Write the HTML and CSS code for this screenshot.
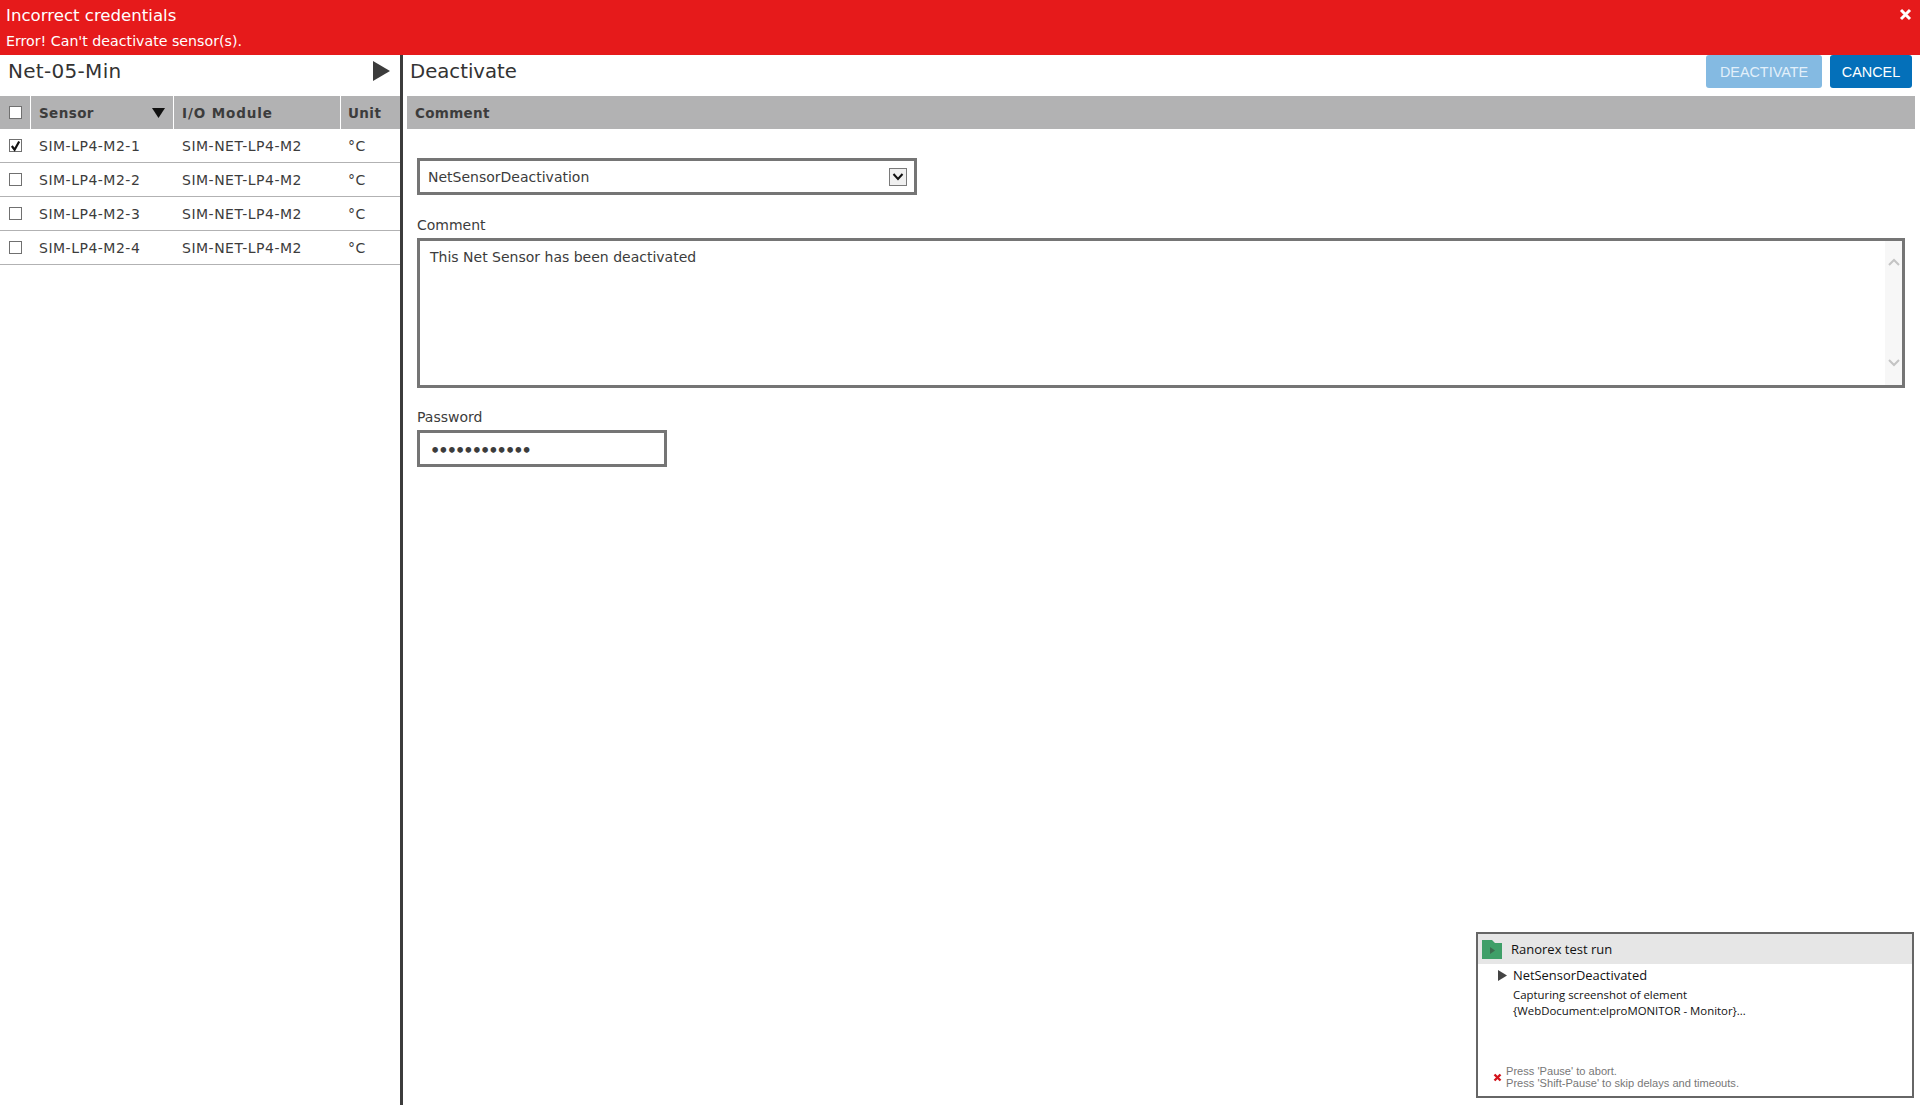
FILE: index.html
```html
<!DOCTYPE html>
<html>
<head>
  <meta charset="utf-8">
  <title>Deactivate</title>
  <link rel="stylesheet" href="styles.css">
</head>
<body>
  <div class="banner">
    <div class="banner-text">
      <div class="banner-title">Incorrect credentials</div>
      <div class="banner-msg">Error! Can't deactivate sensor(s).</div>
    </div>
    <svg class="banner-close" width="13" height="13" viewBox="0 0 13 13"><path d="M2 2l9 9M11 2l-9 9" stroke="#fff" stroke-width="3" fill="none"/></svg>
  </div>

  <div class="main">
    <div class="left-pane">
      <div class="pane-head">
        <span class="pane-title title-net">Net-05-Min</span>
        <svg class="play" width="17" height="20" viewBox="0 0 17 20"><path d="M0 0l17 10L0 20z" fill="#3c3c3c"/></svg>
      </div>
      <div class="grid-row grid-header">
        <div class="cell cell-check"><span class="check"></span></div>
        <div class="cell cell-sensor">Sensor<svg width="13" height="10" viewBox="0 0 13 10"><path d="M0 0h13L6.500 10z" fill="#111"/></svg></div>
        <div class="cell cell-module">I/O Module</div>
        <div class="cell cell-unit">Unit</div>
      </div>
      <div class="grid-row">
        <div class="cell cell-check">
          <span class="check"><svg width="12" height="12" viewBox="0 0 12 12"><path d="M2 6l3 4 5-9" stroke="#111" stroke-width="2.400" fill="none"/></svg></span>
        </div>
        <div class="cell cell-sensor">SIM-LP4-M2-1</div>
        <div class="cell cell-module">SIM-NET-LP4-M2</div>
        <div class="cell cell-unit">°C</div>
      </div>
      <div class="grid-row">
        <div class="cell cell-check"><span class="check"></span></div>
        <div class="cell cell-sensor">SIM-LP4-M2-2</div>
        <div class="cell cell-module">SIM-NET-LP4-M2</div>
        <div class="cell cell-unit">°C</div>
      </div>
      <div class="grid-row">
        <div class="cell cell-check"><span class="check"></span></div>
        <div class="cell cell-sensor">SIM-LP4-M2-3</div>
        <div class="cell cell-module">SIM-NET-LP4-M2</div>
        <div class="cell cell-unit">°C</div>
      </div>
      <div class="grid-row">
        <div class="cell cell-check"><span class="check"></span></div>
        <div class="cell cell-sensor">SIM-LP4-M2-4</div>
        <div class="cell cell-module">SIM-NET-LP4-M2</div>
        <div class="cell cell-unit">°C</div>
      </div>
    </div>

    <div class="right-pane">
      <div class="pane-head right-head">
        <span class="pane-title">Deactivate</span>
        <div class="buttons">
          <span class="btn btn-disabled">DEACTIVATE</span>
          <span class="btn btn-primary">CANCEL</span>
        </div>
      </div>
      <div class="section-bar">Comment</div>
      <div class="form">
        <div class="select-box">
          <span>NetSensorDeactivation</span>
          <span class="select-arrow"><svg width="12" height="8" viewBox="0 0 12 8"><path d="M1.500 1l4.500 5 4.500-5" stroke="#111" stroke-width="2" fill="none"/></svg></span>
        </div>
        <div class="field-label label-comment">Comment</div>
        <div class="textarea-box">
          <span>This Net Sensor has been deactivated</span>
          <div class="scrollbar">
            <svg width="12" height="8" viewBox="0 0 12 8"><path d="M1 7l5-5 5 5" stroke="#c4c4c4" stroke-width="2" fill="none"/></svg>
            <svg width="12" height="8" viewBox="0 0 12 8"><path d="M1 1l5 5 5-5" stroke="#c4c4c4" stroke-width="2" fill="none"/></svg>
          </div>
        </div>
        <div class="field-label label-password">Password</div>
        <div class="password-box">••••••••••••</div>
      </div>
    </div>
  </div>

  <div class="ranorex">
    <div class="ranorex-head">
      <svg width="20" height="19" viewBox="0 0 20 19"><path d="M0 0h10l3 3h7v16H0z" fill="#3f9f68"/><path d="M8 7l5 3.500-5 3.500z" fill="#3d6b4f"/></svg>
      <span>Ranorex test run</span>
    </div>
    <div class="ranorex-body">
      <div class="ranorex-test">
        <svg width="9" height="11" viewBox="0 0 9 11"><path d="M0 0l9 5.500L0 11z" fill="#444"/></svg>
        <span>NetSensorDeactivated</span>
      </div>
      <div class="ranorex-step">Capturing screenshot of element<br>{WebDocument:elproMONITOR - Monitor}...</div>
    </div>
    <div class="ranorex-foot">
      <svg width="9" height="9" viewBox="0 0 9 9"><path d="M1.500 1.500l6 6M7.500 1.500l-6 6" stroke="#d4141c" stroke-width="2.400" fill="none"/></svg>
      <div>Press 'Pause' to abort.<br>Press 'Shift-Pause' to skip delays and timeouts.</div>
    </div>
  </div>
</body>
</html>
```

FILE: styles.css
```css
html, body {
  margin: 0;
  height: 100%;
}
body {
  display: flex;
  flex-direction: column;
  font-family: "DejaVu Sans", Verdana, sans-serif;
  font-size: 14px;
  color: #3c3c3c;
  background: #fff;
  overflow: hidden;
}
.banner {
  height: 55px;
  flex: none;
  background: #e61a1b;
  color: #fff;
  display: flex;
  justify-content: space-between;
  padding: 0 8px 0 6px;
}
.banner-title {
  font-size: 16.600px;
  margin-top: 7px;
  line-height: 18px;
}
.banner-msg {
  font-size: 14.200px;
  margin-top: 8px;
  line-height: 16px;
}
.banner-close {
  margin-top: 8px;
}
.main {
  flex: 1;
  display: flex;
  min-height: 0;
}
.left-pane {
  width: 400px;
  flex: none;
  border-right: 3px solid #3c3c3c;
}
.right-pane {
  flex: 1;
  padding: 0 5px 0 4px;
}
.pane-head {
  height: 41px;
  display: flex;
  justify-content: space-between;
  align-items: flex-start;
  padding: 0 10px 0 8px;
}
.play {
  margin-top: 6px;
}
.right-head {
  padding: 0 3px 0 3px;
}
.pane-title {
  font-size: 19.700px;
  line-height: 24px;
  margin-top: 5px;
  color: #333;
}
.title-net {
  font-size: 20px;
  margin-top: 4px;
  letter-spacing: .3px;
}
.grid-row {
  display: flex;
  height: 34px;
  box-sizing: border-box;
  border-bottom: 1px solid #b2b2b3;
  align-items: center;
  letter-spacing: .5px;
}
.grid-header {
  height: 33px;
  border-bottom: none;
  background: #b2b2b3;
  font-weight: bold;
  font-size: 13.500px;
  letter-spacing: .4px;
}
.grid-header .cell-module {
  letter-spacing: .9px;
}
.cell {
  box-sizing: border-box;
  height: 100%;
  display: flex;
  align-items: center;
  padding-left: 8px;
}
.grid-header .cell {
  border-right: 1px solid #fff;
}
.cell-check {
  width: 31px;
  padding-left: 9px;
}
.cell-sensor {
  width: 143px;
  justify-content: space-between;
  padding-right: 8px;
}
.cell-module {
  width: 167px;
}
.cell-unit {
  width: 59px;
  padding-left: 7px;
}
.grid-header .cell-unit {
  border-right: none;
}
.check {
  width: 13px;
  height: 13px;
  box-sizing: border-box;
  border: 1px solid #707070;
  background: #fff;
  display: flex;
  align-items: center;
  justify-content: center;
}
.buttons {
  display: flex;
  gap: 8px;
}
.btn {
  height: 33px;
  box-sizing: border-box;
  border-radius: 3px;
  display: flex;
  align-items: center;
  justify-content: center;
  font-family: "Liberation Sans", Arial, sans-serif;
  font-size: 14.400px;
  color: #fff;
}
.btn-disabled {
  width: 116px;
  background: #84bae2;
  color: #e2f0fa;
}
.btn-primary {
  width: 82px;
  background: #0470ba;
}
.section-bar {
  height: 33px;
  background: #b2b2b3;
  display: flex;
  align-items: center;
  padding-left: 8px;
  font-weight: bold;
  font-size: 13.500px;
  letter-spacing: .3px;
}
.form {
  padding: 29px 10px 0 10px;
}
.select-box,
.textarea-box,
.password-box {
  box-sizing: border-box;
  border: 3px solid #757575;
  background: #fff;
}
.select-box {
  width: 500px;
  height: 37px;
  display: flex;
  align-items: center;
  justify-content: space-between;
  padding: 0 7px 0 8px;
}
.select-arrow {
  width: 18px;
  height: 18px;
  box-sizing: border-box;
  border: 1px solid #7a7a7a;
  background: #f0f0f0;
  display: flex;
  align-items: center;
  justify-content: center;
}
.field-label {
  line-height: 16px;
}
.label-comment {
  margin-top: 22px;
  margin-bottom: 5px;
}
.textarea-box {
  height: 150px;
  padding: 7px 0 0 10px;
  display: flex;
  justify-content: space-between;
  line-height: 18px;
}
.scrollbar {
  width: 17px;
  margin-top: -7px;
  padding: 17px 0 18px;
  background: #f7f7f7;
  display: flex;
  flex-direction: column;
  justify-content: space-between;
  align-items: center;
  box-sizing: border-box;
  height: 144px;
}
.label-password {
  margin-top: 21px;
  margin-bottom: 5px;
}
.password-box {
  width: 250px;
  height: 37px;
  padding: 3px 0 0 10px;
  display: flex;
  align-items: center;
  letter-spacing: -1.900px;
  font-size: 16px;
  font-weight: bold;
}
.ranorex {
  position: absolute;
  left: 1476px;
  top: 932px;
  width: 438px;
  height: 166px;
  box-sizing: border-box;
  border: 2px solid #666;
  background: #fff;
  display: flex;
  flex-direction: column;
  font-family: "Open Sans", sans-serif;
  color: #111;
}
.ranorex-head {
  height: 30px;
  flex: none;
  background: #e6e6e6;
  display: flex;
  align-items: center;
  gap: 9px;
  padding-left: 4px;
  font-size: 13px;
}
.ranorex-body {
  flex: 1;
  padding: 1px 0 0 20px;
}
.ranorex-test {
  display: flex;
  align-items: center;
  gap: 6px;
  font-size: 12.900px;
  line-height: 20px;
}
.ranorex-step {
  margin: 2px 0 0 15px;
  font-size: 11.400px;
  line-height: 16px;
}
.ranorex-foot {
  display: flex;
  align-items: center;
  gap: 4px;
  padding: 0 0 7px 15px;
  font-family: "Liberation Sans", Arial, sans-serif;
  font-size: 11.100px;
  line-height: 12px;
  color: #777;
}
```
